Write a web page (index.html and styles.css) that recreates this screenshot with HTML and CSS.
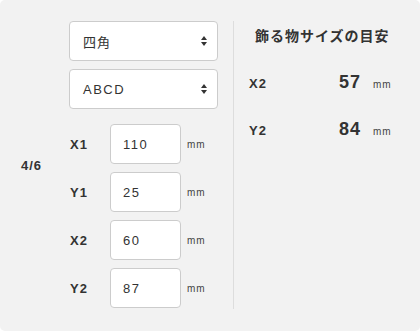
FILE: index.html
```html
<!DOCTYPE html>
<html lang="ja">
<head>
<meta charset="utf-8">
<link rel="stylesheet" href="styles.css">
</head>
<body>
<div class="panel">
  <div class="page">4/6</div>
  <div class="form">
    <div class="select"><span>四角</span><svg class="arrows" width="6" height="10" viewBox="0 0 6 10"><path d="M3 0 L6 4 L0 4 Z M0 6 L6 6 L3 10 Z" fill="#333"/></svg></div>
    <div class="select"><span class="latin">ABCD</span><svg class="arrows" width="6" height="10" viewBox="0 0 6 10"><path d="M3 0 L6 4 L0 4 Z M0 6 L6 6 L3 10 Z" fill="#333"/></svg></div>
    <div class="fields">
      <div class="row"><span class="label">X1</span><div class="input">110</div><span class="unit">mm</span></div>
      <div class="row"><span class="label">Y1</span><div class="input">25</div><span class="unit">mm</span></div>
      <div class="row"><span class="label">X2</span><div class="input">60</div><span class="unit">mm</span></div>
      <div class="row"><span class="label">Y2</span><div class="input">87</div><span class="unit">mm</span></div>
    </div>
  </div>
  <div class="guide">
    <h2 class="title">飾る物サイズの目安</h2>
    <div class="grow"><span class="glabel">X2</span><span class="gval">57</span><span class="unit">mm</span></div>
    <div class="grow"><span class="glabel">Y2</span><span class="gval">84</span><span class="unit">mm</span></div>
  </div>
</div>
</body>
</html>
```
FILE: styles.css
```css
* { box-sizing: border-box; }
html, body { margin: 0; background: #fff; }
body {
  font-family: "Liberation Sans", Arial, "Noto Sans CJK JP", sans-serif;
  color: #333;
}
.panel {
  width: 420px;
  height: 331px;
  background: #f2f2f2;
  border-radius: 5px;
  display: flex;
  padding: 21px 0 0 21px;
}
.page {
  width: 48px;
  height: 288px;
  display: flex;
  align-items: center;
  font-size: 13px;
  font-weight: bold;
  letter-spacing: 1px;
}
.form {
  width: 149px;
  display: flex;
  flex-direction: column;
  gap: 8px;
}
.select {
  height: 40px;
  background: #fff;
  border: 1px solid #ccc;
  border-radius: 4px;
  display: flex;
  align-items: center;
  justify-content: space-between;
  padding: 0 10px 0 13px;
  font-size: 13px;
  font-family: "Noto Sans CJK JP", sans-serif;
  letter-spacing: 1px;
}
.select .latin {
  font-family: "Liberation Sans", Arial, sans-serif;
  letter-spacing: 1.5px;
}
.fields {
  margin-top: 7px;
  display: flex;
  flex-direction: column;
  gap: 8px;
}
.row {
  display: flex;
  align-items: center;
  height: 40px;
}
.label {
  width: 41px;
  padding-left: 1px;
  font-size: 13px;
  font-weight: bold;
  letter-spacing: 1px;
}
.input {
  width: 71px;
  height: 40px;
  background: #fff;
  border: 1px solid #ccc;
  border-radius: 4px;
  display: flex;
  align-items: center;
  padding-left: 12px;
  font-size: 13px;
  letter-spacing: 1.5px;
}
.unit {
  margin-left: 6px;
  font-size: 10px;
  letter-spacing: 1px;
  color: #444;
}
.guide {
  margin-left: 15px;
  height: 288px;
  width: 170px;
  border-left: 1px solid #ddd;
  padding-left: 15px;
}
.title {
  margin: 5px 0 0 6px;
  font-size: 14px;
  font-weight: bold;
  letter-spacing: 1px;
  font-family: "Noto Sans CJK JP", sans-serif;
  line-height: 18px;
}
.grow {
  display: flex;
  align-items: baseline;
  padding-top: 28px;
}
.grow + .grow { padding-top: 26px; }
.glabel {
  width: 90px;
  font-size: 13px;
  font-weight: bold;
  letter-spacing: 1px;
}
.gval {
  width: 28px;
  font-size: 18px;
  font-weight: bold;
  letter-spacing: 1px;
}
.grow .unit { margin-left: 6px; }
```
